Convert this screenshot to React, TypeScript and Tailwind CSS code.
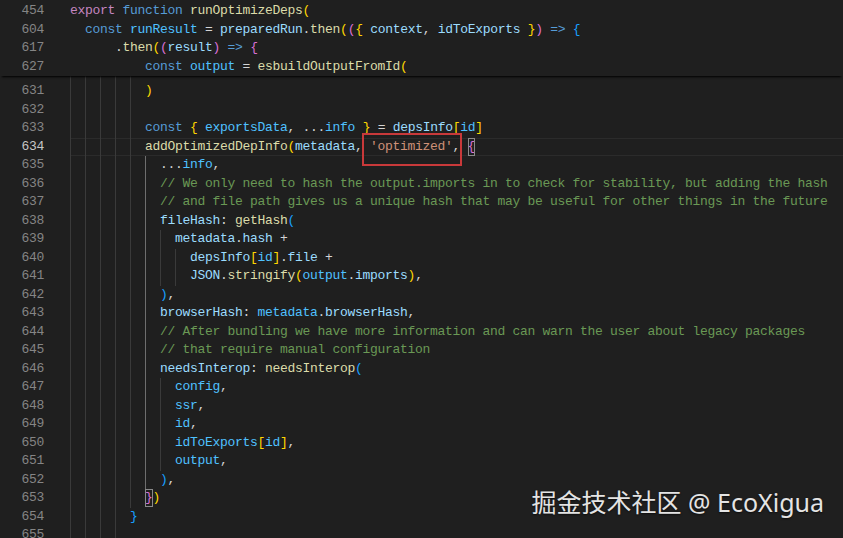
import React from 'react'

// token colours (VS Code dark theme)
const C: Record<string, string> = {
  kw: 'text-[#c586c0]',
  st: 'text-[#569cd6]',
  fn: 'text-[#dcdcaa]',
  v: 'text-[#9cdcfe]',
  cv: 'text-[#4fc1ff]',
  p: 'text-[#d4d4d4]',
  str: 'text-[#ce9178]',
  cm: 'text-[#6a9955]',
  b1: 'text-[#ffd700]',
  b2: 'text-[#da70d6]',
  b3: 'text-[#179fff]',
  m2: 'inline-block h-[18px] leading-[18px] text-[#da70d6] outline outline-1 -outline-offset-1 outline-[#8a8a8a]',
}

type Tok = [string, string]

type Line = {
  n?: number
  indent: number // in 2-space units
  active?: number // index of the highlighted guide
  toks: Tok[]
}

const sticky: Line[] = [
  { n: 454, indent: 0, toks: [['export', 'kw'], [' ', 'p'], ['function', 'st'], [' ', 'p'], ['runOptimizeDeps', 'fn'], ['(', 'b1']] },
  {
    n: 604,
    indent: 1,
    toks: [
      ['const', 'st'], [' ', 'p'], ['runResult', 'cv'], [' = ', 'p'], ['preparedRun', 'v'], ['.', 'p'], ['then', 'fn'],
      ['(', 'b1'], ['(', 'b2'], ['{', 'b1'], [' ', 'p'], ['context', 'v'], [', ', 'p'], ['idToExports', 'v'], [' ', 'p'],
      ['}', 'b1'], [')', 'b2'], [' ', 'p'], ['=>', 'st'], [' ', 'p'], ['{', 'b3'],
    ],
  },
  { n: 617, indent: 3, toks: [['.', 'p'], ['then', 'fn'], ['(', 'b1'], ['(', 'b2'], ['result', 'v'], [')', 'b2'], [' ', 'p'], ['=>', 'st'], [' ', 'p'], ['{', 'b2']] },
  { n: 627, indent: 5, toks: [['const', 'st'], [' ', 'p'], ['output', 'cv'], [' = ', 'p'], ['esbuildOutputFromId', 'fn'], ['(', 'b1']] },
]

const body: Line[] = [
  { n: 631, indent: 5, toks: [[')', 'b1']] },
  { n: 632, indent: 5, toks: [] },
  {
    n: 633,
    indent: 5,
    toks: [
      ['const', 'st'], [' ', 'p'], ['{', 'b1'], [' ', 'p'], ['exportsData', 'cv'], [', ...', 'p'], ['info', 'cv'], [' ', 'p'],
      ['}', 'b1'], [' = ', 'p'], ['depsInfo', 'v'], ['[', 'b1'], ['id', 'cv'], [']', 'b1'],
    ],
  },
  {
    n: 634,
    indent: 5,
    toks: [['addOptimizedDepInfo', 'fn'], ['(', 'b1'], ['metadata', 'v'], [', ', 'p'], ["'optimized'", 'str'], [', ', 'p'], ['{', 'm2']],
  },
  { n: 635, indent: 6, active: 5, toks: [['...', 'p'], ['info', 'cv'], [',', 'p']] },
  { n: 636, indent: 6, active: 5, toks: [['// We only need to hash the output.imports in to check for stability, but adding the hash', 'cm']] },
  { n: 637, indent: 6, active: 5, toks: [['// and file path gives us a unique hash that may be useful for other things in the future', 'cm']] },
  { n: 638, indent: 6, active: 5, toks: [['fileHash', 'v'], [': ', 'p'], ['getHash', 'fn'], ['(', 'b3']] },
  { n: 639, indent: 7, active: 5, toks: [['metadata', 'v'], ['.', 'p'], ['hash', 'v'], [' +', 'p']] },
  { n: 640, indent: 8, active: 5, toks: [['depsInfo', 'v'], ['[', 'b1'], ['id', 'cv'], [']', 'b1'], ['.', 'p'], ['file', 'v'], [' +', 'p']] },
  {
    n: 641,
    indent: 8,
    active: 5,
    toks: [['JSON', 'v'], ['.', 'p'], ['stringify', 'fn'], ['(', 'b1'], ['output', 'cv'], ['.', 'p'], ['imports', 'v'], [')', 'b1'], [',', 'p']],
  },
  { n: 642, indent: 6, active: 5, toks: [[')', 'b3'], [',', 'p']] },
  { n: 643, indent: 6, active: 5, toks: [['browserHash', 'v'], [': ', 'p'], ['metadata', 'cv'], ['.', 'p'], ['browserHash', 'v'], [',', 'p']] },
  { n: 644, indent: 6, active: 5, toks: [['// After bundling we have more information and can warn the user about legacy packages', 'cm']] },
  { n: 645, indent: 6, active: 5, toks: [['// that require manual configuration', 'cm']] },
  { n: 646, indent: 6, active: 5, toks: [['needsInterop', 'v'], [': ', 'p'], ['needsInterop', 'fn'], ['(', 'b3']] },
  { n: 647, indent: 7, active: 5, toks: [['config', 'cv'], [',', 'p']] },
  { n: 648, indent: 7, active: 5, toks: [['ssr', 'cv'], [',', 'p']] },
  { n: 649, indent: 7, active: 5, toks: [['id', 'cv'], [',', 'p']] },
  { n: 650, indent: 7, active: 5, toks: [['idToExports', 'cv'], ['[', 'b1'], ['id', 'cv'], [']', 'b1'], [',', 'p']] },
  { n: 651, indent: 7, active: 5, toks: [['output', 'cv'], [',', 'p']] },
  { n: 652, indent: 6, active: 5, toks: [[')', 'b3'], [',', 'p']] },
  { n: 653, indent: 5, toks: [['}', 'm2'], [')', 'b1']] },
  { n: 654, indent: 4, toks: [['}', 'b3']] },
  { n: 655, indent: 4, toks: [] },
]

const CodeRow = ({ line, guides = true, current = false, h = 'h-[18.5px]' }: { line: Line; guides?: boolean; current?: boolean; h?: string }) => (
  <div className={`flex ${h} leading-[18.5px]`}>
    <div className={`w-[44px] shrink-0 text-right ${current ? 'text-[#c6c6c6]' : 'text-[#858585]'}`}>{line.n ?? ''}</div>
    <div className="w-[26px] shrink-0" />
    <div
      className={`flex flex-1 whitespace-pre ${current ? 'shadow-[inset_0_1px_0_#2b2b2b,inset_0_-1px_0_#2b2b2b]' : ''}`}
    >
      {Array.from({ length: line.indent }).map((_, i) => (
        <span
          key={i}
          className={`w-[15px] shrink-0 self-stretch ${
            guides ? (i === line.active ? 'border-l border-[#6e6e6e]' : 'border-l border-[#3a3a3a]') : ''
          }`}
        />
      ))}
      <span>
        {line.toks.map(([t, k], i) => (
          <span key={i} className={C[k]}>
            {t}
          </span>
        ))}
      </span>
    </div>
  </div>
)

export default function App() {
  return (
    <div className="relative h-[538px] w-[843px] overflow-hidden bg-[#1f1f1f] font-['Liberation_Mono',monospace] text-[13px] tracking-[-0.3px] text-[#d4d4d4]">
      {/* sticky scroll */}
      <div className="relative z-10 bg-[#1f1f1f] pt-[2px] shadow-[0_3px_2px_-2px_#000]">
        {sticky.map((l) => (
          <CodeRow key={l.n} line={l} guides={false} />
        ))}
      </div>

      {/* tail of line 630 under the sticky header */}
      <CodeRow line={{ indent: 5, toks: [] }} h="h-[6px]" />

      {body.map((l) => (
        <CodeRow key={l.n} line={l} current={l.n === 634} />
      ))}

      {/* annotation box */}
      <div className="absolute left-[362px] top-[133px] h-[33px] w-[100px] border-2 border-[#c9393a]" />

      {/* watermark */}
      <div className="absolute right-[19px] top-[490px] font-['Noto_Sans','Noto_Sans_CJK_SC',sans-serif] text-[25px] leading-none tracking-normal text-[#e4e4e4] [text-shadow:0_1px_2px_rgba(0,0,0,0.6)]">
        掘金技术社区 @ EcoXigua
      </div>
    </div>
  )
}
